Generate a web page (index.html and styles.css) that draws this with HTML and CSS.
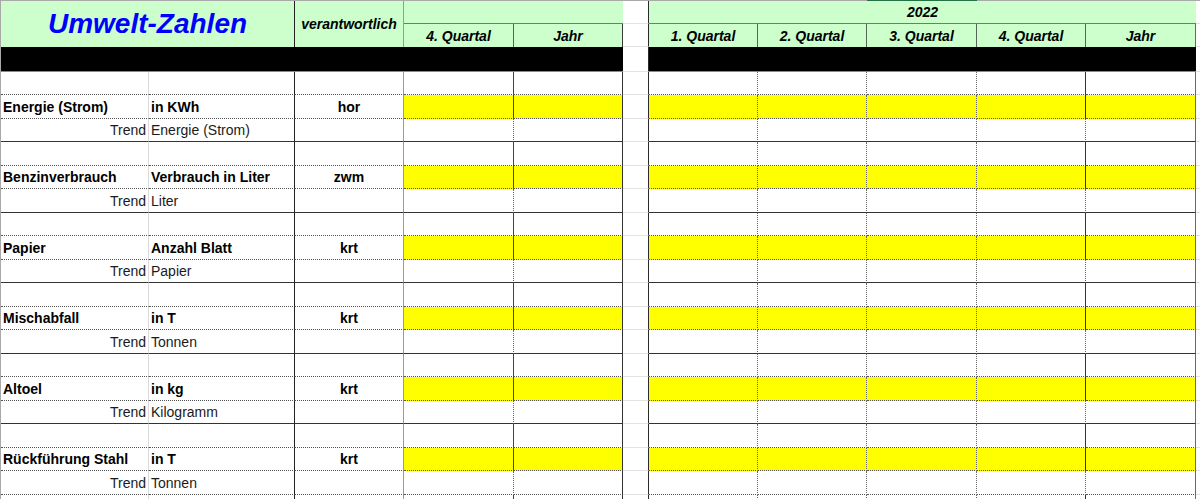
FILE: index.html
```
<!DOCTYPE html>
<html lang="de">
<head>
<meta charset="utf-8">
<title>Umwelt-Zahlen</title>
<link rel="stylesheet" href="styles.css">
</head>
<body>
<div class="sheet">
  <div class="sel-mark"></div>
  <div class="head">
    <div class="h-title">Umwelt-Zahlen</div>
    <div class="h-verant">verantwortlich</div>
    <div class="h-de1"></div>
    <div class="h-f1"></div>
    <div class="h-year">2022</div>
    <div class="h-l1"></div>
    <div class="h-q q-d">4. Quartal</div>
    <div class="h-q q-e">Jahr</div>
    <div class="h-f2"></div>
    <div class="h-q q-g">1. Quartal</div>
    <div class="h-q q-h">2. Quartal</div>
    <div class="h-q q-i">3. Quartal</div>
    <div class="h-q q-j">4. Quartal</div>
    <div class="h-q q-k">Jahr</div>
    <div class="h-l2"></div>
  </div>

  <div class="bar">
    <div class="bar-left"></div>
    <div class="c f"></div>
    <div class="bar-right"></div>
    <div class="c l"></div>
  </div>

  <div class="body">
    <div class="row blank"><div class="c a"></div><div class="c b"></div><div class="c cc"></div><div class="c d"></div><div class="c e"></div><div class="c f"></div><div class="c g"></div><div class="c h"></div><div class="c i"></div><div class="c j"></div><div class="c k"></div><div class="c l"></div></div>
    <div class="row data"><div class="c a">Energie (Strom)</div><div class="c b">in KWh</div><div class="c cc">hor</div><div class="c d"></div><div class="c e"></div><div class="c f"></div><div class="c g"></div><div class="c h"></div><div class="c i"></div><div class="c j"></div><div class="c k"></div><div class="c l"></div></div>
    <div class="row trend"><div class="c a">Trend</div><div class="c b">Energie (Strom)</div><div class="c cc"></div><div class="c d"></div><div class="c e"></div><div class="c f"></div><div class="c g"></div><div class="c h"></div><div class="c i"></div><div class="c j"></div><div class="c k"></div><div class="c l"></div></div>

    <div class="row blank"><div class="c a"></div><div class="c b"></div><div class="c cc"></div><div class="c d"></div><div class="c e"></div><div class="c f"></div><div class="c g"></div><div class="c h"></div><div class="c i"></div><div class="c j"></div><div class="c k"></div><div class="c l"></div></div>
    <div class="row data"><div class="c a">Benzinverbrauch</div><div class="c b">Verbrauch in Liter</div><div class="c cc">zwm</div><div class="c d"></div><div class="c e"></div><div class="c f"></div><div class="c g"></div><div class="c h"></div><div class="c i"></div><div class="c j"></div><div class="c k"></div><div class="c l"></div></div>
    <div class="row trend"><div class="c a">Trend</div><div class="c b">Liter</div><div class="c cc"></div><div class="c d"></div><div class="c e"></div><div class="c f"></div><div class="c g"></div><div class="c h"></div><div class="c i"></div><div class="c j"></div><div class="c k"></div><div class="c l"></div></div>

    <div class="row blank"><div class="c a"></div><div class="c b"></div><div class="c cc"></div><div class="c d"></div><div class="c e"></div><div class="c f"></div><div class="c g"></div><div class="c h"></div><div class="c i"></div><div class="c j"></div><div class="c k"></div><div class="c l"></div></div>
    <div class="row data"><div class="c a">Papier</div><div class="c b">Anzahl Blatt</div><div class="c cc">krt</div><div class="c d"></div><div class="c e"></div><div class="c f"></div><div class="c g"></div><div class="c h"></div><div class="c i"></div><div class="c j"></div><div class="c k"></div><div class="c l"></div></div>
    <div class="row trend"><div class="c a">Trend</div><div class="c b">Papier</div><div class="c cc"></div><div class="c d"></div><div class="c e"></div><div class="c f"></div><div class="c g"></div><div class="c h"></div><div class="c i"></div><div class="c j"></div><div class="c k"></div><div class="c l"></div></div>

    <div class="row blank"><div class="c a"></div><div class="c b"></div><div class="c cc"></div><div class="c d"></div><div class="c e"></div><div class="c f"></div><div class="c g"></div><div class="c h"></div><div class="c i"></div><div class="c j"></div><div class="c k"></div><div class="c l"></div></div>
    <div class="row data"><div class="c a">Mischabfall</div><div class="c b">in T</div><div class="c cc">krt</div><div class="c d"></div><div class="c e"></div><div class="c f"></div><div class="c g"></div><div class="c h"></div><div class="c i"></div><div class="c j"></div><div class="c k"></div><div class="c l"></div></div>
    <div class="row trend"><div class="c a">Trend</div><div class="c b">Tonnen</div><div class="c cc"></div><div class="c d"></div><div class="c e"></div><div class="c f"></div><div class="c g"></div><div class="c h"></div><div class="c i"></div><div class="c j"></div><div class="c k"></div><div class="c l"></div></div>

    <div class="row blank"><div class="c a"></div><div class="c b"></div><div class="c cc"></div><div class="c d"></div><div class="c e"></div><div class="c f"></div><div class="c g"></div><div class="c h"></div><div class="c i"></div><div class="c j"></div><div class="c k"></div><div class="c l"></div></div>
    <div class="row data"><div class="c a">Altoel</div><div class="c b">in kg</div><div class="c cc">krt</div><div class="c d"></div><div class="c e"></div><div class="c f"></div><div class="c g"></div><div class="c h"></div><div class="c i"></div><div class="c j"></div><div class="c k"></div><div class="c l"></div></div>
    <div class="row trend"><div class="c a">Trend</div><div class="c b">Kilogramm</div><div class="c cc"></div><div class="c d"></div><div class="c e"></div><div class="c f"></div><div class="c g"></div><div class="c h"></div><div class="c i"></div><div class="c j"></div><div class="c k"></div><div class="c l"></div></div>

    <div class="row blank"><div class="c a"></div><div class="c b"></div><div class="c cc"></div><div class="c d"></div><div class="c e"></div><div class="c f"></div><div class="c g"></div><div class="c h"></div><div class="c i"></div><div class="c j"></div><div class="c k"></div><div class="c l"></div></div>
    <div class="row data"><div class="c a">Rückführung Stahl</div><div class="c b">in T</div><div class="c cc">krt</div><div class="c d"></div><div class="c e"></div><div class="c f"></div><div class="c g"></div><div class="c h"></div><div class="c i"></div><div class="c j"></div><div class="c k"></div><div class="c l"></div></div>
    <div class="row trend last"><div class="c a">Trend</div><div class="c b">Tonnen</div><div class="c cc"></div><div class="c d"></div><div class="c e"></div><div class="c f"></div><div class="c g"></div><div class="c h"></div><div class="c i"></div><div class="c j"></div><div class="c k"></div><div class="c l"></div></div>

    <div class="row blank"><div class="c a"></div><div class="c b"></div><div class="c cc"></div><div class="c d"></div><div class="c e"></div><div class="c f"></div><div class="c g"></div><div class="c h"></div><div class="c i"></div><div class="c j"></div><div class="c k"></div><div class="c l"></div></div>
  </div>
</div>
</body>
</html>
```

FILE: styles.css
```
* { box-sizing: border-box; }

html, body {
  margin: 0;
  padding: 0;
  height: 499px;
  overflow: hidden;
  background: #ffffff;
}

body {
  font-family: "Liberation Sans", Arial, sans-serif;
  font-size: 14px;
  color: #000;
}

.sheet {
  position: relative;
  width: 1200px;
  border-top: 1px solid #a9a9a9;
  border-left: 1px solid #a9a9a9;
}

.sel-mark {
  position: absolute;
  top: -1px;
  left: 866px;
  width: 110px;
  height: 1px;
  background: #217346;
}

/* shared column template */
.head,
.bar,
.row {
  display: grid;
  grid-template-columns: 148px 146px 109px 110px 109px 26px 109px 109px 110px 109px 110px 1fr;
}

/* ---------- header ---------- */
.head {
  grid-template-rows: 23px 23px;
  font-weight: bold;
  font-style: italic;
}

.head > div {
  display: flex;
  align-items: center;
  justify-content: center;
}

.h-title {
  grid-column: 1 / 3;
  grid-row: 1 / 3;
  background: #ccffcc;
  border-right: 1px solid #222;
  color: #0000ff;
  font-size: 28px;
}

.h-verant {
  grid-column: 3;
  grid-row: 1 / 3;
  background: #ccffcc;
  border-right: 1px solid #9a9a9a;
}

.h-de1 {
  grid-column: 4 / 6;
  grid-row: 1;
  background: #ccffcc;
  border-bottom: 1px solid #6b806b;
}

.h-f1 {
  grid-column: 6;
  grid-row: 1;
  border-bottom: 1px solid #e2e2e2;
  border-right: 1px solid #2a2a2a;
}

.h-year {
  grid-column: 7 / 12;
  grid-row: 1;
  background: #ccffcc;
  border-bottom: 1px solid #6b806b;
}

.h-l1 {
  grid-column: 12;
  grid-row: 1;
  border-bottom: 1px solid #e2e2e2;
}

.h-q {
  grid-row: 2;
  background: #ccffcc;
  border-right: 1px solid #566656;
}

.q-d { grid-column: 4; }
.q-e { grid-column: 5; border-right-color: #3a3a3a; }
.q-g { grid-column: 7; }
.q-h { grid-column: 8; }
.q-i { grid-column: 9; }
.q-j { grid-column: 10; }
.q-k { grid-column: 11; border-right-color: #6a6a6a; }

.h-f2 {
  grid-column: 6;
  grid-row: 2;
  border-bottom: 1px solid #e2e2e2;
  border-right: 1px solid #2a2a2a;
}

.h-l2 {
  grid-column: 12;
  grid-row: 2;
  border-bottom: 1px solid #e2e2e2;
}

/* ---------- black bar ---------- */
.bar {
  height: 25px;
}

.bar-left {
  grid-column: 1 / 6;
  background: #000;
  border-bottom: 1px solid #8a8a8a;
}

.bar-right {
  grid-column: 7 / 12;
  background: #000;
  border-bottom: 1px solid #8a8a8a;
}

/* ---------- body rows ---------- */
.body .row:nth-child(odd) { height: 23px; }
.body .row:nth-child(even) { height: 24px; }

.c {
  display: flex;
  align-items: center;
  padding: 0 2px;
  white-space: nowrap;
  overflow: hidden;
  border-bottom: 1px dotted #555;
}

.trend .c { border-bottom: 1px solid #333; }
.trend.last .c { border-bottom: 1px dotted #555; }

.c.f,
.c.l,
.trend .c.f,
.trend .c.l {
  border-bottom: 1px solid #e2e2e2;
}

.a { border-right: 1px solid #dadada; }
.b { border-right: 1px solid #222; }
.cc { border-right: 1px solid #9a9a9a; justify-content: center; }
.d { border-right: 1px solid #444; }
.e { border-right: 1px solid #333; }
.c.f { border-right: 1px solid #2a2a2a; }
.g, .h, .i { border-right: 1px dotted #666; }
.j { border-right: 1px solid #333; }
.k { border-right: 1px solid #6a6a6a; }

.trend .d,
.trend .j { border-right: 1px dotted #666; }

.data .c { font-weight: bold; }
.data .d, .data .e,
.data .g, .data .h, .data .i, .data .j, .data .k {
  background: #ffff00;
}

.trend .a { justify-content: flex-end; }
.trend .c { color: #1a1a1a; }
```
